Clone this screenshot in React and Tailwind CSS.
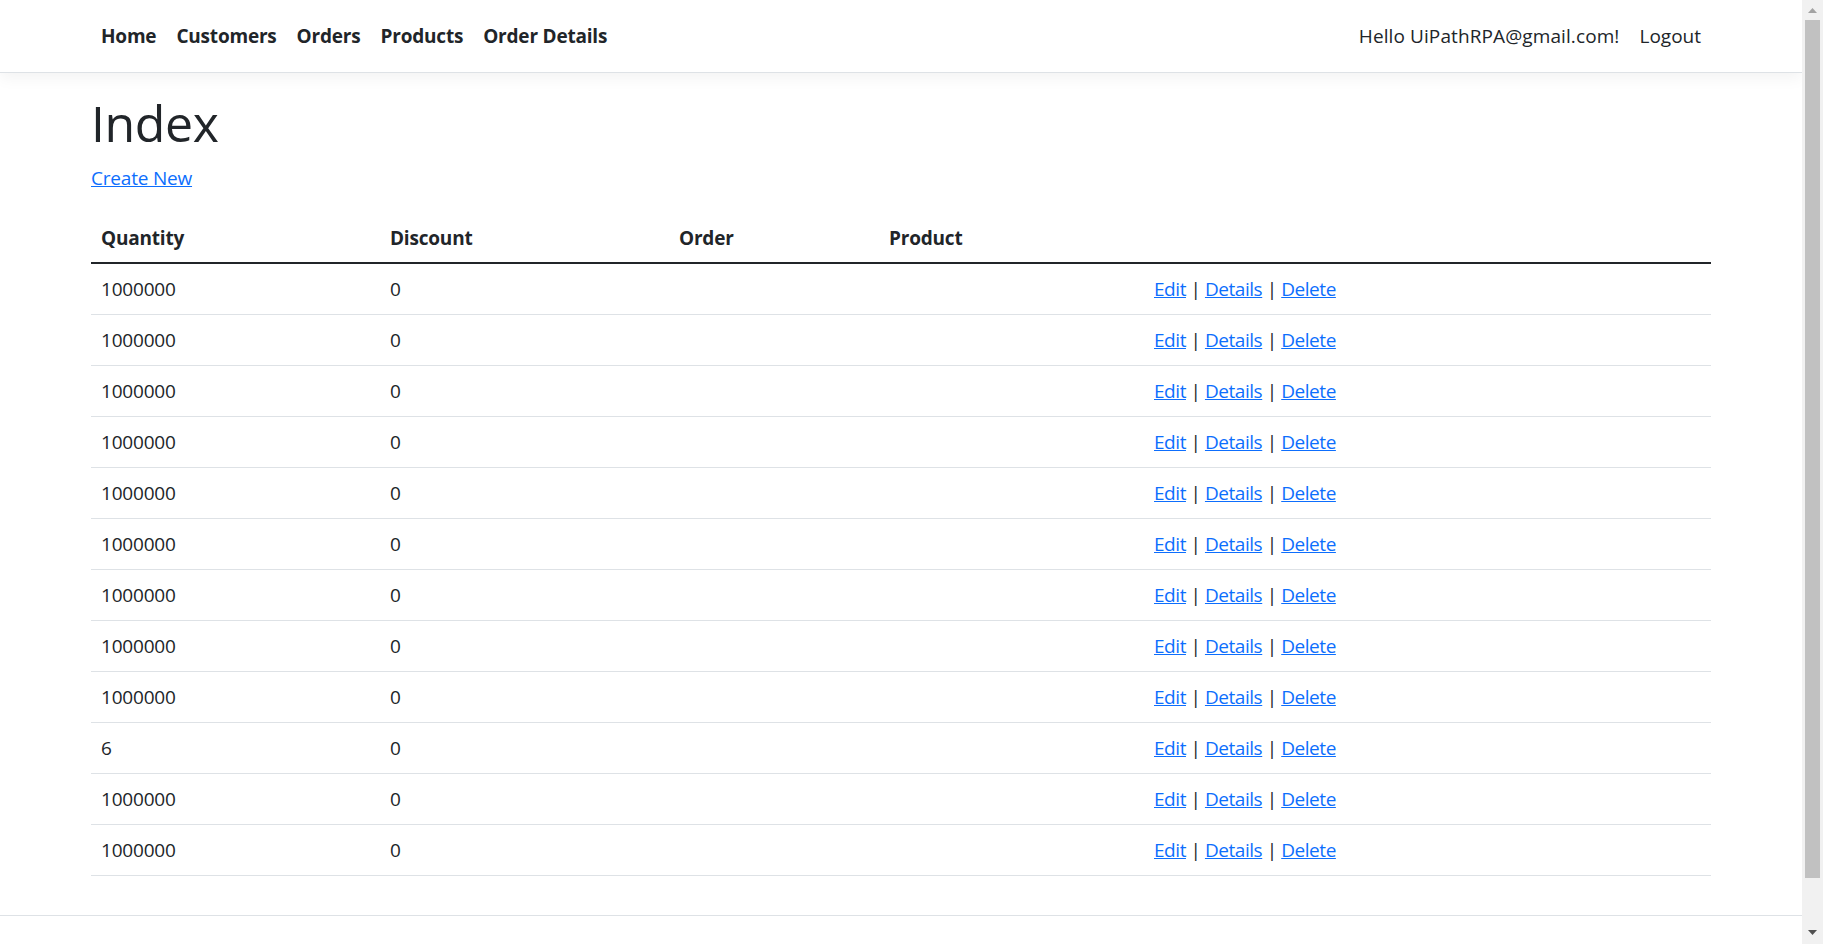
import React from 'react'

const navItems = ['Home', 'Customers', 'Orders', 'Products', 'Order Details']

const rows = [
  '1000000', '1000000', '1000000', '1000000', '1000000', '1000000',
  '1000000', '1000000', '1000000', '6', '1000000', '1000000',
]

export default function App() {
  return (
    <div className="flex h-[944px] overflow-hidden bg-white text-[19px] leading-[30px] text-[#212529] font-['Open_Sans','Noto_Sans',sans-serif] tracking-[-0.2px]">
      <div className="flex min-w-0 flex-1 flex-col">
        {/* Navbar */}
        <header className="mb-[20px] border-b border-[#dee2e6] bg-white shadow-[0_5px_15px_rgba(0,0,0,0.05)]">
          <nav className="mx-auto flex w-[1650px] items-center justify-between px-[15px] py-[11px]">
            <ul className="flex">
              {navItems.map((item) => (
                <li key={item}>
                  <a href="#" className="block px-[10px] py-[10px] font-bold text-[#212529]">
                    {item}
                  </a>
                </li>
              ))}
            </ul>
            <ul className="flex">
              <li>
                <span className="block px-[10px] py-[10px] tracking-[0.1px] text-[#212529]">Hello UiPathRPA@gmail.com!</span>
              </li>
              <li>
                <a href="#" className="block px-[10px] py-[10px] tracking-normal text-[#212529]">Logout</a>
              </li>
            </ul>
          </nav>
        </header>

        {/* Main */}
        <main className="mx-auto w-[1650px] px-[15px]">
          <h1 className="mb-[10px] text-[50px] font-medium leading-[60px] tracking-[-0.4px]">Index</h1>
          <p className="mb-[20px]">
            <a href="#" className="text-[#0d6efd] underline">Create New</a>
          </p>
          <table className="mb-[39px] w-full table-fixed border-collapse text-left">
            <thead>
              <tr className="border-b-2 border-[#212529]">
                <th className="w-[289px] px-[10px] pt-[10px] pb-[9px] font-bold">Quantity</th>
                <th className="w-[289px] px-[10px] pt-[10px] pb-[9px] font-bold">Discount</th>
                <th className="w-[210px] px-[10px] pt-[10px] pb-[9px] font-bold">Order</th>
                <th className="w-[265px] px-[10px] pt-[10px] pb-[9px] font-bold">Product</th>
                <th className="w-[567px] px-[10px] pt-[10px] pb-[9px]"></th>
              </tr>
            </thead>
            <tbody>
              {rows.map((qty, index) => (
                <tr key={index} className="border-b border-[#dee2e6]">
                  <td className="px-[10px] py-[10px]">{qty}</td>
                  <td className="px-[10px] py-[10px]">0</td>
                  <td className="px-[10px] py-[10px]"></td>
                  <td className="px-[10px] py-[10px]"></td>
                  <td className="px-[10px] py-[10px] tracking-[-0.45px]">
                    <a href="#" className="text-[#0d6efd] underline">Edit</a> |{' '}
                    <a href="#" className="text-[#0d6efd] underline">Details</a> |{' '}
                    <a href="#" className="text-[#0d6efd] underline">Delete</a>
                  </td>
                </tr>
              ))}
            </tbody>
          </table>
        </main>

        {/* Footer */}
        <footer className="h-[75px] border-t border-[#dee2e6]"></footer>
      </div>

      {/* Scrollbar */}
      <div className="flex w-[21px] shrink-0 flex-col bg-[#f1f1f1]">
        <div className="flex h-[20px] items-center justify-center">
          <svg width="9" height="5" viewBox="0 0 9 5">
            <path d="M4.5 0L9 5H0z" fill="#a3a3a3" />
          </svg>
        </div>
        <div className="mx-[3px] h-[858px] bg-[#c1c1c1]"></div>
        <div className="flex-1"></div>
        <div className="flex h-[24px] items-center justify-center">
          <svg width="9" height="5" viewBox="0 0 9 5">
            <path d="M0 0H9L4.5 5z" fill="#505050" />
          </svg>
        </div>
      </div>
    </div>
  )
}
